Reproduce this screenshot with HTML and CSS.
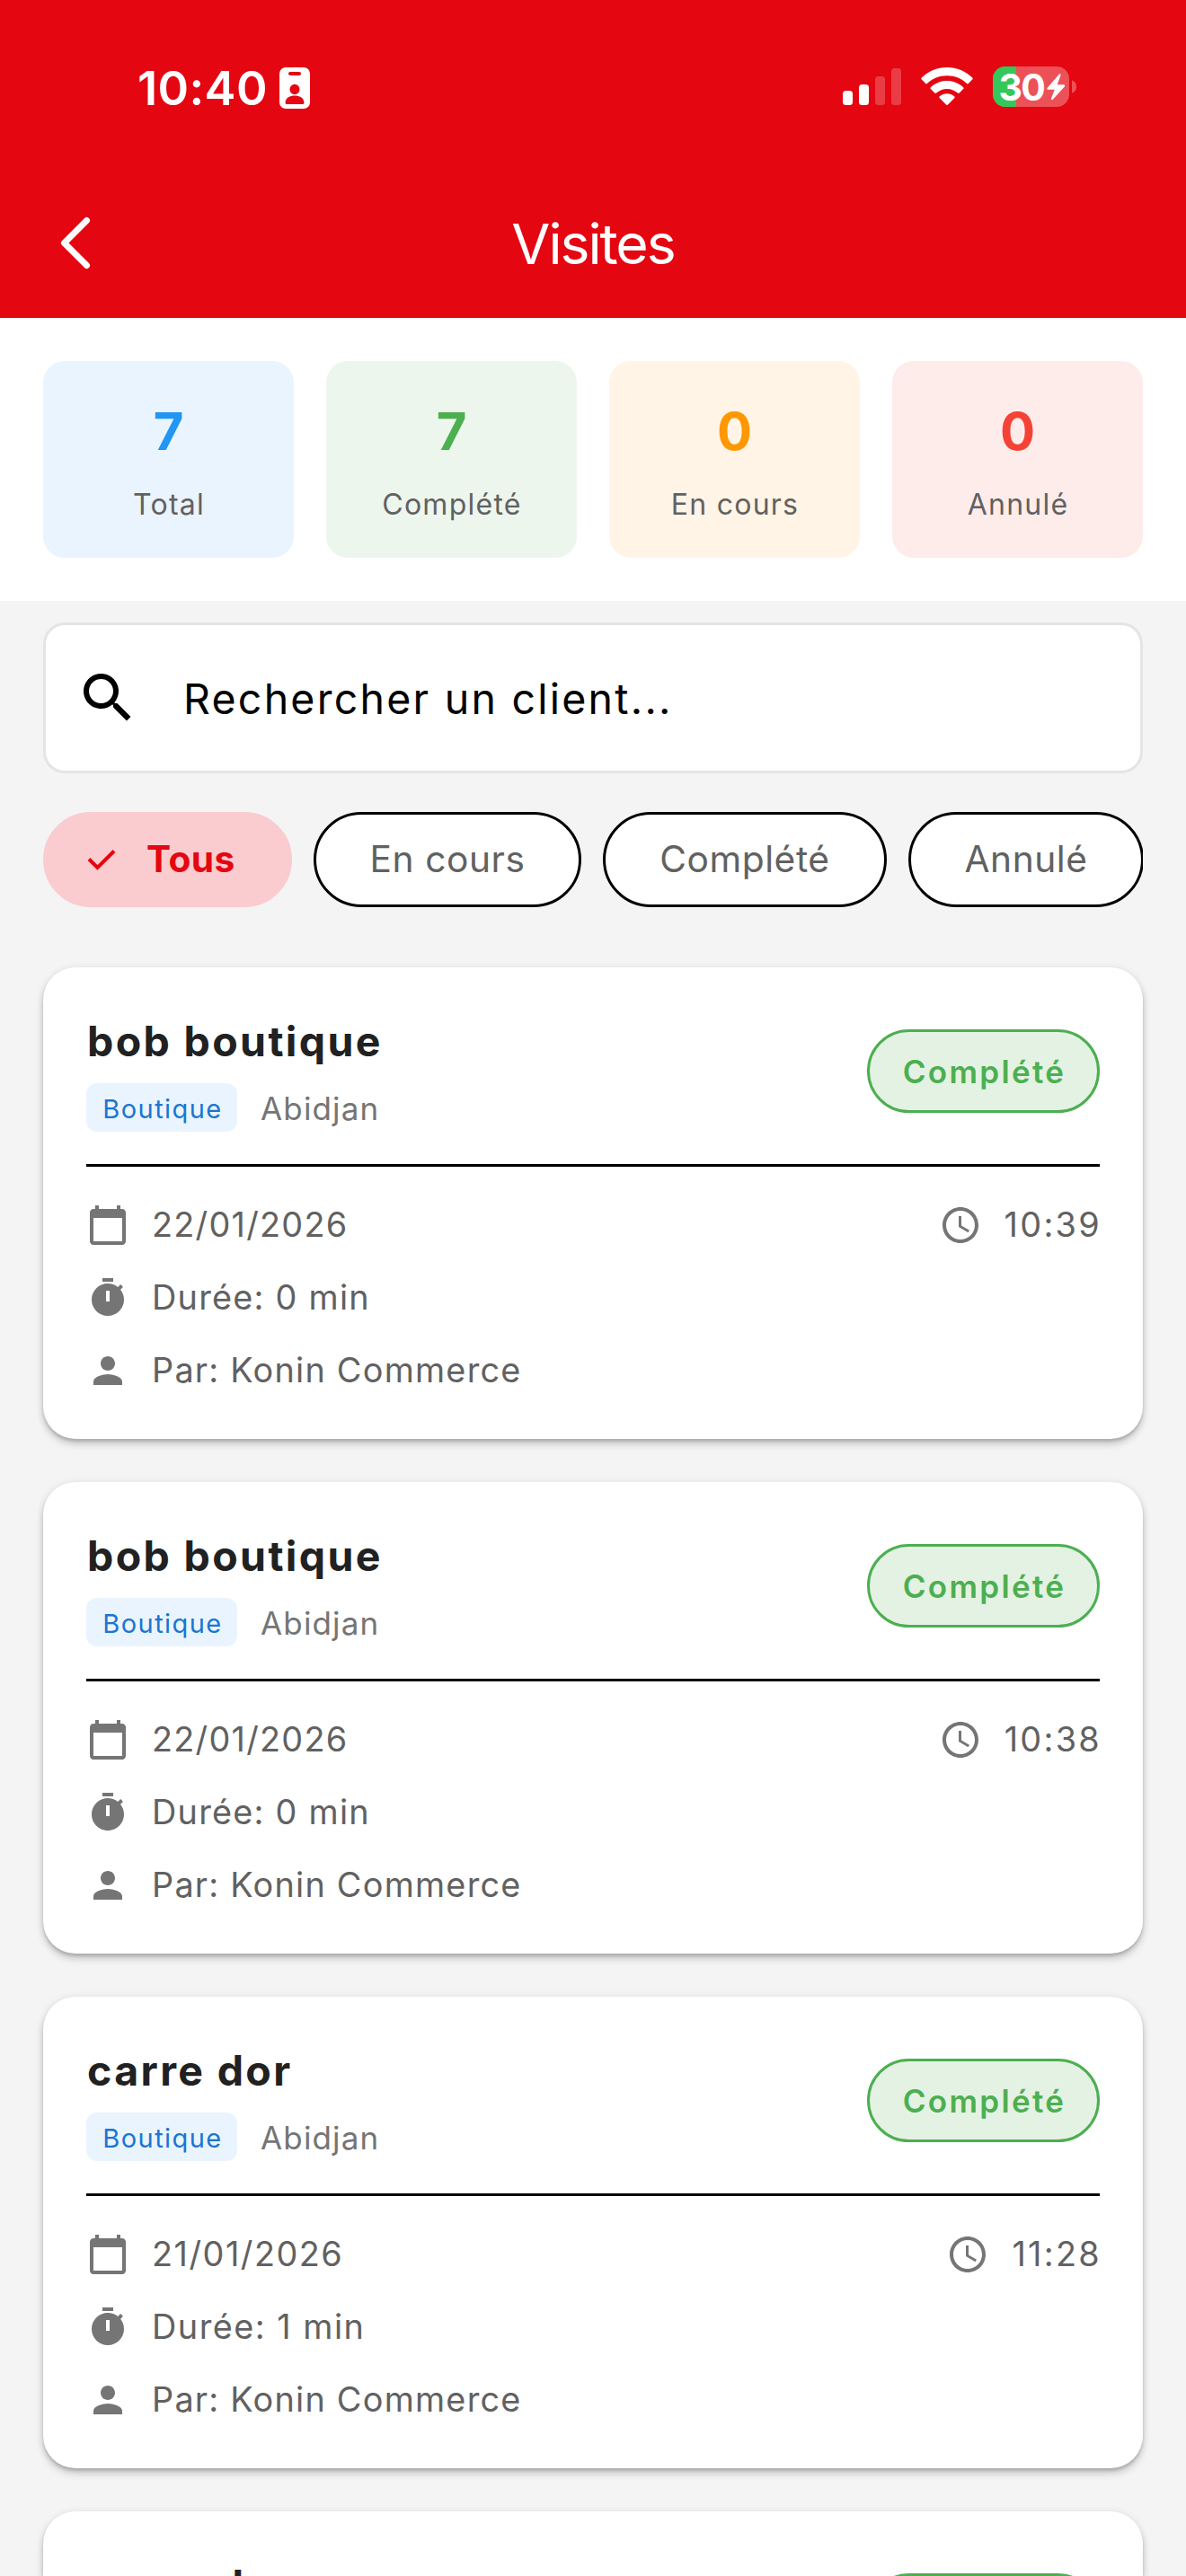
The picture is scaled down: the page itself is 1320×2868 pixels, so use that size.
FILE: index.html
```html
<!DOCTYPE html>
<html lang="fr">
<head>
<meta charset="utf-8">
<title>Visites</title>
<link rel="stylesheet" href="styles.css">
</head>
<body>
<svg width="0" height="0" class="sprite" aria-hidden="true">
  <symbol id="calendar" viewBox="0 0 24 24"><path d="M20 3h-1V1h-2v2H7V1H5v2H4c-1.1 0-2 .9-2 2v16c0 1.100.9 2 2 2h16c1.100 0 2-.9 2-2V5c0-1.100-.9-2-2-2zm0 18H4V8h16v13z"/></symbol>
  <symbol id="clock" viewBox="0 0 24 24"><path d="M11.990 2C6.470 2 2 6.480 2 12s4.470 10 9.990 10C17.520 22 22 17.520 22 12S17.520 2 11.990 2zM12 20c-4.420 0-8-3.580-8-8s3.580-8 8-8 8 3.580 8 8-3.580 8-8 8zm.5-13H11v6l5.250 3.150.75-1.230-4.500-2.670z"/></symbol>
  <symbol id="timer" viewBox="0 0 24 24"><path d="M9 1h6v2H9zM19.030 7.390l1.420-1.420c-.45-.51-.9-.97-1.410-1.410L17.620 5.980C16.070 4.740 14.120 4 12 4c-4.970 0-9 4.030-9 9s4.020 9 9 9 9-4.030 9-9c0-2.120-.74-4.070-1.970-5.610zM13 14h-2V8h2v6z"/></symbol>
  <symbol id="person" viewBox="0 0 24 24"><path d="M12 12c2.210 0 4-1.790 4-4s-1.790-4-4-4-4 1.790-4 4 1.790 4 4 4zm0 2c-2.670 0-8 1.340-8 4v2h16v-2c0-2.660-5.330-4-8-4z"/></symbol>
</svg>

<header class="header">
  <div class="status">
    <div class="status-left">
      <span class="time">10:40</span>
      <svg class="id-badge" width="34" height="46" viewBox="0 0 34 46">
        <rect width="34" height="46" rx="7" fill="#fff"/>
        <rect x="10" y="5" width="14" height="4" rx="2" fill="#e40611"/>
        <ellipse cx="17" cy="24.500" rx="5.500" ry="5.800" fill="#e40611"/>
        <path d="M6.500 39c.8-5.300 5-7.500 10.500-7.500S26.700 33.700 27.500 39q.2 2-1.500 2H8q-1.700 0-1.500-2z" fill="#e40611"/>
      </svg>
    </div>
    <div class="status-right">
      <svg width="65" height="48" viewBox="0 0 65 48" fill="#fff">
        <rect x="0" y="27" width="11" height="16" rx="3.500"/>
        <rect x="18" y="20" width="11" height="23" rx="3.500"/>
        <rect x="36" y="11" width="11" height="32" rx="3.500" opacity=".22"/>
        <rect x="54" y="2" width="11" height="41" rx="3.500" opacity=".22"/>
      </svg>
      <svg width="58" height="48" viewBox="0 0 58 48" fill="#fff">
        <path d="M29 1C18 1 8 5.400.8 12.600q-1 1 0 2L5.200 19q.8.800 1.700 0C12.700 13.500 20.400 10.200 29 10.200s16.300 3.300 22.100 8.800q.9.800 1.700 0l4.400-4.400q1-1 0-2C50 5.400 40 1 29 1z"/>
        <path d="M29 16c-7 0-13.400 2.700-18.200 7.200q-.9.900 0 1.900l4.500 4.500q.9.800 1.800 0C20.300 26.800 24.400 25 29 25s8.700 1.800 11.900 4.600q.9.800 1.800 0l4.500-4.500q.9-1 0-1.900C42.400 18.700 36 16 29 16z"/>
        <path d="M29 30.200c-3.200 0-6 1.200-8.200 3.100q-1 .9 0 1.900l7.200 7.300q1 .9 2 0l7.200-7.300q1-1 0-1.900c-2.200-1.900-5-3.100-8.200-3.100z"/>
      </svg>
      <svg class="battery" width="94" height="48" viewBox="0 0 94 48">
        <defs><clipPath id="cell"><rect width="85" height="45" rx="14"/></clipPath></defs>
        <g clip-path="url(#cell)">
          <rect width="85" height="45" fill="#fff" opacity=".3"/>
          <rect width="26" height="45" fill="#34c759"/>
        </g>
        <path d="M88 15.500c3.500.8 5 3.800 5 7s-1.500 6.200-5 7z" fill="#fff" opacity=".3"/>
        <text class="battery-text" x="6.500" y="37.500">30</text>
        <path d="M74 8.500 60.500 24q-.8 1.500.8 1.800h7.500L65 35.500q-.2 2.500 1.800 1.200L80 22.200q.8-1.600-.8-1.900h-7.500L75.500 10q.2-2.600-1.500-1.500z" fill="#fff"/>
      </svg>
    </div>
  </div>
  <nav class="nav">
    <svg width="36" height="60" viewBox="0 0 36 60"><path d="M30.500 4.500 5.500 29.500l25 25" fill="none" stroke="#fff" stroke-width="7" stroke-linecap="round" stroke-linejoin="round"/></svg>
    <h1 class="nav-title">Visites</h1>
  </nav>
</header>

<section class="stats">
  <div class="stat blue"><b>7</b><span>Total</span></div>
  <div class="stat green"><b>7</b><span>Complété</span></div>
  <div class="stat orange"><b>0</b><span>En cours</span></div>
  <div class="stat red"><b>0</b><span>Annulé</span></div>
</section>

<main class="content">
  <div class="search">
    <svg width="72" height="72" viewBox="0 0 24 24"><path d="M15.500 14h-.79l-.28-.27C15.410 12.590 16 11.110 16 9.500 16 5.910 13.090 3 9.500 3S3 5.910 3 9.500 5.910 16 9.500 16c1.610 0 3.090-.59 4.230-1.570l.27.28v.79l5 4.990L20.490 19l-4.990-5zm-6 0C7.010 14 5 11.990 5 9.500S7.010 5 9.500 5 14 7.010 14 9.500 11.990 14 9.500 14z"/></svg>
    <span>Rechercher un client...</span>
  </div>

  <div class="chips">
    <div class="chip active"><svg width="32" height="24" viewBox="0 0 32 24"><path d="M2 11.500 11.500 21 30 2.500" fill="none" stroke="#e40611" stroke-width="4"/></svg><span>Tous</span></div>
    <div class="chip chip-progress">En cours</div>
    <div class="chip chip-done">Complété</div>
    <div class="chip chip-cancelled">Annulé</div>
  </div>

  <div class="list">
    <article class="card">
      <div class="head">
        <div><h2>bob boutique</h2><div class="meta"><span class="tag">Boutique</span><span class="city">Abidjan</span></div></div>
        <span class="badge">Complété</span>
      </div>
      <div class="rows">
        <div class="row"><svg><use href="#calendar"/></svg><span>22/01/2026</span><div class="hour"><svg><use href="#clock"/></svg><span>10:39</span></div></div>
        <div class="row"><svg><use href="#timer"/></svg><span>Durée: 0 min</span></div>
        <div class="row"><svg><use href="#person"/></svg><span>Par: Konin Commerce</span></div>
      </div>
    </article>
    <article class="card">
      <div class="head">
        <div><h2>bob boutique</h2><div class="meta"><span class="tag">Boutique</span><span class="city">Abidjan</span></div></div>
        <span class="badge">Complété</span>
      </div>
      <div class="rows">
        <div class="row"><svg><use href="#calendar"/></svg><span>22/01/2026</span><div class="hour"><svg><use href="#clock"/></svg><span>10:38</span></div></div>
        <div class="row"><svg><use href="#timer"/></svg><span>Durée: 0 min</span></div>
        <div class="row"><svg><use href="#person"/></svg><span>Par: Konin Commerce</span></div>
      </div>
    </article>
    <article class="card">
      <div class="head">
        <div><h2>carre dor</h2><div class="meta"><span class="tag">Boutique</span><span class="city">Abidjan</span></div></div>
        <span class="badge">Complété</span>
      </div>
      <div class="rows">
        <div class="row"><svg><use href="#calendar"/></svg><span class="spaced">21/01/2026</span><div class="hour"><svg><use href="#clock"/></svg><span>11:28</span></div></div>
        <div class="row"><svg><use href="#timer"/></svg><span class="spaced">Durée: 1 min</span></div>
        <div class="row"><svg><use href="#person"/></svg><span>Par: Konin Commerce</span></div>
      </div>
    </article>
    <article class="card">
      <div class="head">
        <div><h2>carre dor</h2></div>
        <span class="badge"></span>
      </div>
    </article>
  </div>
</main>
</body>
</html>
```
FILE: styles.css
```css
* { box-sizing: border-box; }
body {
  margin: 0;
  width: 1320px;
  height: 2868px;
  overflow: hidden;
  display: flex;
  flex-direction: column;
  background: #f4f4f4;
  font-family: Inter, "Liberation Sans", sans-serif;
  color: #212121;
}
svg { display: block; flex: none; }
h1, h2 { margin: 0; }
.sprite { position: absolute; }

/* Header */
.header { flex: none; height: 354px; background: #e40611; color: #fff; }
.status {
  height: 187px;
  padding: 9px 121px 0 153px;
  display: flex;
  align-items: center;
  justify-content: space-between;
}
.status-left { display: flex; align-items: center; gap: 15px; }
.time { width: 143px; font-size: 52.4px; font-weight: 600; letter-spacing: .4px; white-space: nowrap; }
.status-right { display: flex; align-items: center; gap: 22px; }
.battery { overflow: visible; }
.battery-text { font-size: 41px; font-weight: 700; letter-spacing: -1.700px; fill: #fff; }
.nav {
  height: 167px;
  padding: 0 66px;
  display: grid;
  grid-template-columns: 36px 1fr 36px;
  align-items: center;
}
.nav-title { text-align: center; font-size: 62.500px; font-weight: 400; letter-spacing: -2.050px; line-height: 80px; }

/* Counters */
.stats {
  flex: none;
  height: 315px;
  padding: 48px;
  display: grid;
  grid-template-columns: repeat(4, 1fr);
  gap: 36px;
  background: #fff;
}
.stat {
  padding-top: 42px;
  border-radius: 24px;
  display: flex;
  flex-direction: column;
  align-items: center;
  gap: 21px;
}
.stat b { font-size: 58px; line-height: 72px; font-weight: 700; }
.stat span { padding-left: 1px; font-size: 32px; line-height: 50px; letter-spacing: 1.250px; color: #616161; }
.blue { background: #e9f4fe; color: #2196f3; }
.green { background: #edf6ed; color: #4caf50; }
.orange { background: #fff4e5; color: #ff9800; }
.red { background: #feeceb; color: #f44336; }

/* Search and filters */
.content { flex: 1; min-height: 0; overflow: hidden; padding: 24px 48px 0; }
.search {
  height: 168px;
  padding-left: 33px;
  display: flex;
  align-items: center;
  gap: 48px;
  background: #fff;
  border: 3px solid #e4e4e4;
  border-radius: 24px;
  color: #000;
  font-size: 46.500px;
  letter-spacing: 2.240px;
}
.search span { padding-top: 2px; }
.chips {
  margin-top: 43px;
  display: flex;
  gap: 24px;
  overflow: hidden;
}
.chip {
  flex: none;
  height: 106px;
  padding-bottom: 1px;
  display: flex;
  align-items: center;
  justify-content: center;
  border: 3px solid #000;
  border-radius: 53px;
  background: #fff;
  color: #616161;
  font-size: 40.700px;
  letter-spacing: .55px;
}
.active {
  width: 277px;
  padding-left: 46px;
  justify-content: flex-start;
  gap: 34px;
  background: #facccf;
  border-color: #facccf;
  color: #e40611;
  font-weight: 700;
  letter-spacing: .4px;
}
.chip-progress { width: 298px; }
.chip-done { width: 316px; }
.chip-cancelled { width: 262px; }

/* Visit cards */
.list { margin-top: 67px; display: grid; gap: 48px; }
.card {
  height: 525px;
  padding: 48px;
  background: #fff;
  border-radius: 36px;
  box-shadow: 0 3px 3px rgba(0, 0, 0, .12), 0 6px 9px rgba(0, 0, 0, .16), 0 1px 10px rgba(0, 0, 0, .09);
}
.card:last-child { height: 72px; padding-bottom: 0; border-radius: 36px 36px 0 0; overflow: hidden; }
.head {
  height: 174px;
  padding-bottom: 36px;
  border-bottom: 3px solid #000;
  display: flex;
  align-items: center;
  justify-content: space-between;
}
.head > div { height: 135px; }
.card h2 { padding-left: 1px; font-size: 46.500px; line-height: 68px; font-weight: 700; letter-spacing: 2.350px; }
.meta { margin-top: 13px; display: flex; gap: 24px; }
.tag {
  width: 168px;
  height: 54px;
  padding-left: 2px;
  border-radius: 12px;
  background: #e9f4fe;
  color: #1976d2;
  font-size: 29px;
  line-height: 57px;
  letter-spacing: 1.440px;
  text-align: center;
}
.city { padding-left: 2px; font-size: 35px; line-height: 56px; letter-spacing: 1.150px; color: #757575; }
.badge {
  width: 259px;
  height: 93px;
  padding-left: 2px;
  border: 3px solid #4caf50;
  border-radius: 47px;
  background: #e4f2e4;
  color: #4caf50;
  font-size: 35px;
  line-height: 89px;
  font-weight: 600;
  letter-spacing: 2.330px;
  text-align: center;
}
.rows { margin-top: 41px; display: grid; gap: 33px; }
.row, .hour { display: flex; align-items: center; gap: 24px; }
.row { height: 48px; font-size: 37.800px; letter-spacing: 1.250px; color: #616161; }
.row span { margin-top: -2px; padding-left: 1px; }
.row .spaced { letter-spacing: 1.500px; }
.row svg { width: 48px; height: 48px; fill: #757575; }
.hour { margin-left: auto; margin-right: -2px; letter-spacing: 2.300px; }
```
